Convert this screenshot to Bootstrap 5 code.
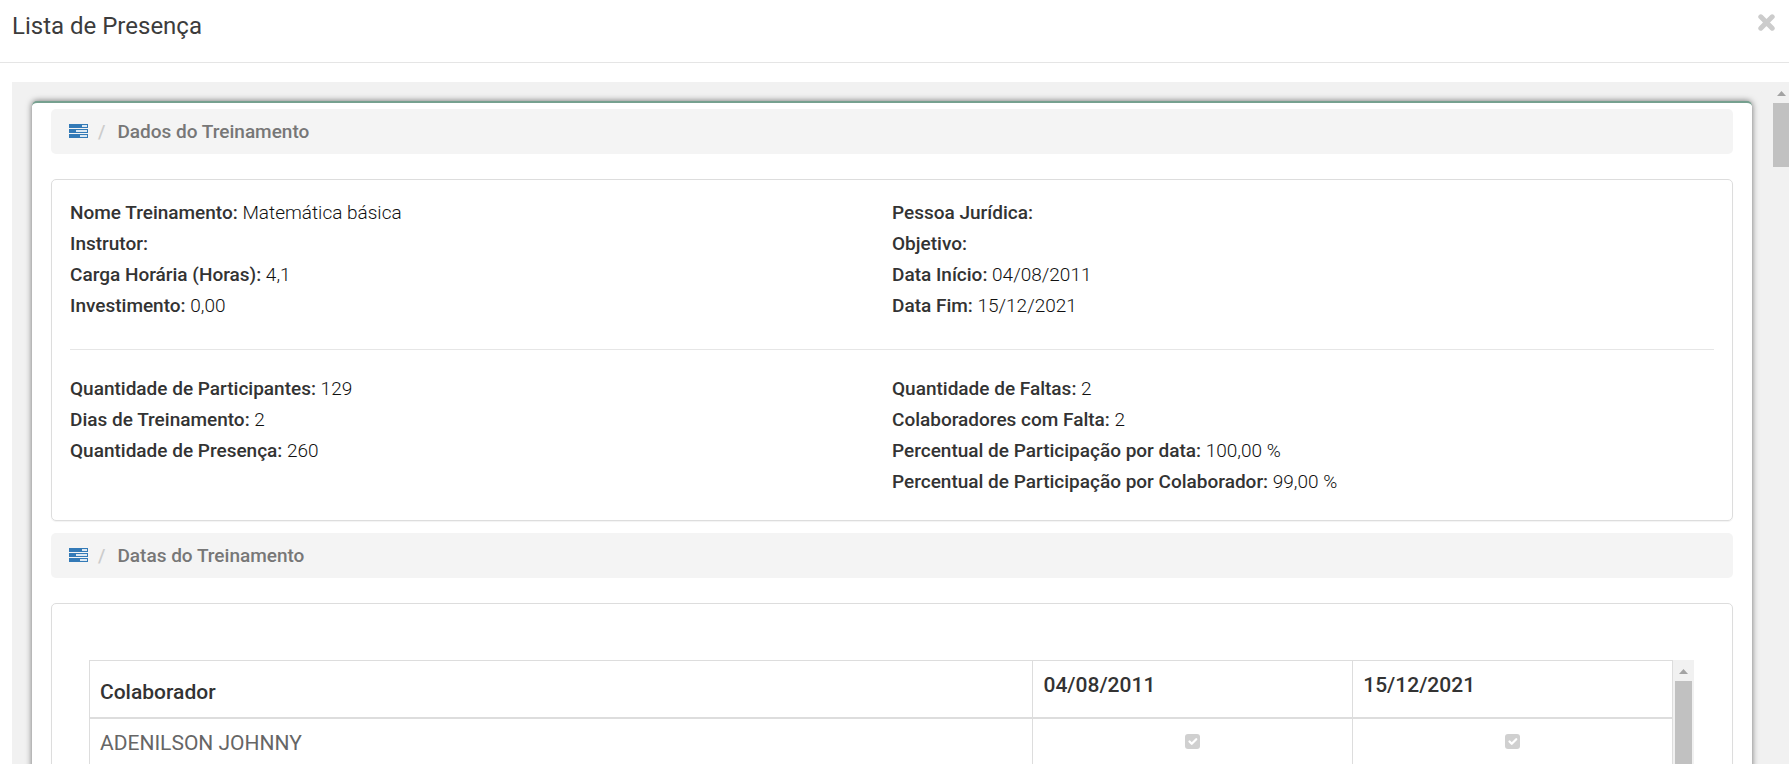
<!DOCTYPE html>
<html lang="pt-BR">
<head>
<meta charset="utf-8">
<meta name="viewport" content="width=device-width, initial-scale=1">
<title>Lista de Presença</title>
<link href="https://cdn.jsdelivr.net/npm/bootstrap@5.3.0/dist/css/bootstrap.min.css" rel="stylesheet">
<style>
  body { font-family: Roboto, "Liberation Sans", sans-serif; font-size: 19px; line-height: 31px; color: #111; font-weight: 300; }
  .dialog-head { height: 63px; padding: 10px 12px; border-bottom: 1px solid #e5e5e5; }
  .dialog-title { font-size: 24px; line-height: 32px; font-weight: 400; color: #3c3c3c; }
  .close-btn { line-height: 0; padding: 4px 2px; }
  .scroll-area { background: #f1f1f1; margin: 19px 0 0 12px; }
  .page-col { min-width: 0; padding: 19px 21px 0 20px; }
  .panel { background: #fff; border-top: 2px solid #76a08f; border-radius: 5px 5px 0 0; padding: 6px 19px 0; box-shadow: 0 0 6px rgba(0,0,0,.55); }
  .crumbs { --bs-breadcrumb-divider-color: #ccc; --bs-breadcrumb-item-padding-x: 10px; background: #f4f4f4; border-radius: 5px; height: 45px; padding: 0 18px; margin-bottom: 25px; font-weight: 400; }
  .crumbs .active { color: #777; font-weight: 500; }
  .crumbs a { display: block; line-height: 0; padding-bottom: 2px; }
  .crumbs .breadcrumb-item + .breadcrumb-item::before { padding-right: 12px; }
  .info-box { border: 1px solid #ddd; border-radius: 5px; padding: 17px 18px 23px; margin-bottom: 12px; box-shadow: 0 1px 1px rgba(0,0,0,.05); }
  .info-box strong { font-weight: 500; color: #333; }
  .info-box hr { margin: 28px 0 23px; border-color: #ddd; opacity: .75; }
  .table-box { padding: 56px 38px 60px 37px; }
  .attendance { --bs-table-color: #333; border-color: #ddd; font-size: 21px; line-height: 28px; table-layout: fixed; }
  .attendance th, .attendance td { padding: 10px; }
  .attendance thead th { height: 57px; font-weight: 500; vertical-align: top; border-bottom: 2px solid #ddd; }
  .attendance thead th:first-child { padding-top: 17px; }
  .attendance tbody td { height: 60px; }
  .attendance .person { --bs-table-color: #666; color: #666; font-weight: 400; }
  .date-col { width: 20.2%; }
  .attendance .form-check-input { width: 15px; height: 15px; margin: 5px 0 0; border-radius: 3px; display: block; margin-inline: auto; opacity: 1; border: 0; background-color: #d0d0d0; background-size: 15px; }
  .bar-track { width: 16px; background: #f1f1f1; flex: none; padding-top: 9px; }
  .bar-track svg { display: block; margin: 0 auto 7px; }
  .bar-thumb { height: 64px; background: #c1c1c1; }
  .inner-track { width: 21px; padding: 9px 2px 0; }
  .inner-track .bar-thumb { height: 240px; }
</style>
</head>
<body class="vh-100 overflow-hidden d-flex flex-column">
  <header class="dialog-head d-flex justify-content-between align-items-start flex-shrink-0">
    <h1 class="dialog-title m-0">Lista de Presença</h1>
    <button type="button" class="close-btn border-0 bg-transparent" aria-label="Fechar">
      <svg width="17" height="17" viewBox="0 0 17 17" fill="none" stroke="#ccc" stroke-width="5" stroke-linecap="round"><path d="M2.800 2.800 14.200 14.200M14.200 2.800 2.800 14.200"/></svg>
    </button>
  </header>

  <main class="scroll-area d-flex flex-grow-1 overflow-hidden">
    <div class="page-col flex-grow-1">
      <div class="panel">
        <nav aria-label="Dados do Treinamento">
          <ol class="breadcrumb crumbs align-items-center">
            <li class="breadcrumb-item"><a href="#" aria-label="Treinamento"><svg width="19" height="14" viewBox="0 0 19 14"><path fill="#337ab7" d="M0 0h19v4H0zM0 5h19v4H0zM0 10h19v4H0z"/><path fill="#dce8f2" d="M13 1h5v2h-5zM7 6h11v2H7zM11 11h7v2h-7z"/></svg></a></li>
            <li class="breadcrumb-item active" aria-current="page">Dados do Treinamento</li>
          </ol>
        </nav>

        <section class="info-box">
          <div class="row g-0">
            <div class="col-6">
              <div><strong>Nome Treinamento:</strong> Matemática básica</div>
              <div><strong>Instrutor:</strong></div>
              <div><strong>Carga Horária (Horas):</strong> 4,1</div>
              <div><strong>Investimento:</strong> 0,00</div>
            </div>
            <div class="col-6">
              <div><strong>Pessoa Jurídica:</strong></div>
              <div><strong>Objetivo:</strong></div>
              <div><strong>Data Início:</strong> 04/08/2011</div>
              <div><strong>Data Fim:</strong> 15/12/2021</div>
            </div>
          </div>
          <hr>
          <div class="row g-0">
            <div class="col-6">
              <div><strong>Quantidade de Participantes:</strong> 129</div>
              <div><strong>Dias de Treinamento:</strong> 2</div>
              <div><strong>Quantidade de Presença:</strong> 260</div>
            </div>
            <div class="col-6">
              <div><strong>Quantidade de Faltas:</strong> 2</div>
              <div><strong>Colaboradores com Falta:</strong> 2</div>
              <div><strong>Percentual de Participação por data:</strong> 100,00 %</div>
              <div><strong>Percentual de Participação por Colaborador:</strong> 99,00 %</div>
            </div>
          </div>
        </section>

        <nav aria-label="Datas do Treinamento">
          <ol class="breadcrumb crumbs align-items-center">
            <li class="breadcrumb-item"><a href="#" aria-label="Treinamento"><svg width="19" height="14" viewBox="0 0 19 14"><path fill="#337ab7" d="M0 0h19v4H0zM0 5h19v4H0zM0 10h19v4H0z"/><path fill="#dce8f2" d="M13 1h5v2h-5zM7 6h11v2H7zM11 11h7v2h-7z"/></svg></a></li>
            <li class="breadcrumb-item active" aria-current="page">Datas do Treinamento</li>
          </ol>
        </nav>

        <section class="info-box table-box d-flex">
          <table class="table table-bordered attendance mb-0">
            <colgroup><col><col class="date-col"><col class="date-col"></colgroup>
            <thead>
              <tr><th scope="col">Colaborador</th><th scope="col">04/08/2011</th><th scope="col">15/12/2021</th></tr>
            </thead>
            <tbody>
              <tr>
                <td class="person">ADENILSON JOHNNY</td>
                <td><input class="form-check-input" type="checkbox" checked disabled aria-label="ADENILSON JOHNNY, 04/08/2011"></td>
                <td><input class="form-check-input" type="checkbox" checked disabled aria-label="ADENILSON JOHNNY, 15/12/2021"></td>
              </tr>
            </tbody>
          </table>
          <div class="bar-track inner-track" aria-hidden="true">
            <svg width="9" height="5" viewBox="0 0 9 5"><path fill="#a3a3a3" d="M0 5 4.500 0 9 5z"/></svg>
            <div class="bar-thumb"></div>
          </div>
        </section>
      </div>
    </div>
    <div class="bar-track" aria-hidden="true">
      <svg width="9" height="5" viewBox="0 0 9 5"><path fill="#a3a3a3" d="M0 5 4.500 0 9 5z"/></svg>
      <div class="bar-thumb"></div>
    </div>
  </main>
<script src="https://cdn.jsdelivr.net/npm/bootstrap@5.3.0/dist/js/bootstrap.bundle.min.js"></script>
</body>
</html>
